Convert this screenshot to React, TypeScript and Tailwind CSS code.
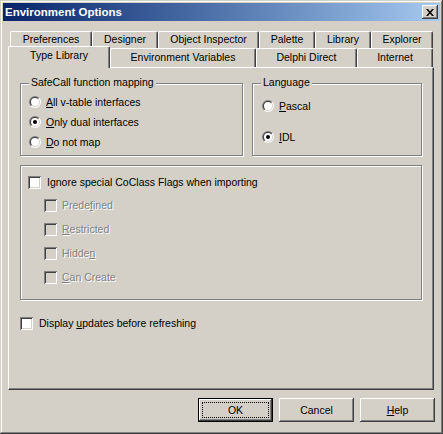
import React from 'react';

const raised =
  'shadow-[inset_-1px_-1px_#404040,inset_1px_1px_#ffffff,inset_-2px_-2px_#808080,inset_2px_2px_#d4d0c8]';

const Radio: React.FC<{ checked?: boolean }> = ({ checked }) => (
  <svg width="12" height="12" viewBox="0 0 12 12" className="shrink-0">
    <defs>
      <linearGradient id="rOuter" x1="0" y1="0" x2="1" y2="1">
        <stop offset="0.5" stopColor="#808080" />
        <stop offset="0.5" stopColor="#ffffff" />
      </linearGradient>
      <linearGradient id="rInner" x1="0" y1="0" x2="1" y2="1">
        <stop offset="0.5" stopColor="#404040" />
        <stop offset="0.5" stopColor="#d4d0c8" />
      </linearGradient>
    </defs>
    <circle cx="6" cy="6" r="6" fill="url(#rOuter)" />
    <circle cx="6" cy="6" r="5" fill="url(#rInner)" />
    <circle cx="6" cy="6" r="4" fill="#ffffff" />
    {checked && <circle cx="6" cy="6" r="2" fill="#000000" />}
  </svg>
);

const Check: React.FC<{ disabled?: boolean }> = ({ disabled }) => (
  <span
    className={`block w-[13px] h-[13px] shrink-0 shadow-[inset_1px_1px_#808080,inset_-1px_-1px_#ffffff,inset_2px_2px_#404040,inset_-2px_-2px_#d4d0c8] ${
      disabled ? 'bg-[#d4d0c8]' : 'bg-white'
    }`}
  />
);

const Group: React.FC<{ label: string; className: string; children?: React.ReactNode }> = ({
  label,
  className,
  children,
}) => (
  <div
    className={`relative border border-[#808080] shadow-[inset_1px_1px_#ffffff,1px_1px_#ffffff] ${className}`}
  >
    {label && (
      <span className="absolute -top-[8px] left-[8px] px-[2px] bg-[#d4d0c8] leading-[13px]">{label}</span>
    )}
    {children}
  </div>
);

const Tab: React.FC<{ label: string; w: string; selected?: boolean; front?: boolean }> = ({
  label,
  w,
  selected,
  front,
}) => {
  if (selected) {
    return (
      <div
        className={`${w} relative z-10 -ml-[2px] -mt-[2px] h-[22px] bg-[#d4d0c8] border-l border-t border-white border-r border-r-[#404040] rounded-tl-[2px] rounded-tr-[2px] shadow-[inset_-1px_0_#808080] flex items-start justify-center pt-[2px]`}
      >
        {label}
      </div>
    );
  }
  return (
    <div
      className={`${w} ${front ? 'h-[19px] pt-[2px]' : 'h-[17px] pt-[1px]'} shrink-0 bg-[#d4d0c8] border-l border-t border-white border-r border-r-[#404040] rounded-tl-[2px] rounded-tr-[2px] shadow-[inset_-1px_0_#808080] flex items-start justify-center`}
    >
      {label}
    </div>
  );
};

const Button: React.FC<{ children: React.ReactNode; isDefault?: boolean }> = ({ children, isDefault }) =>
  isDefault ? (
    <div className="w-[75px] h-[24px] border border-black">
      <div className={`w-full h-full ${raised} p-[3px]`}>
        <div className="w-full h-full border border-dotted border-black flex items-center justify-center">
          {children}
        </div>
      </div>
    </div>
  ) : (
    <div className={`w-[75px] h-[24px] ${raised} flex items-center justify-center`}>{children}</div>
  );

const Dim: React.FC<{ children: React.ReactNode }> = ({ children }) => (
  <span className="text-[#808080] [text-shadow:1px_1px_0_#ffffff]">{children}</span>
);

export default function App() {
  return (
    <div className="w-[443px] h-[434px] bg-[#d4d0c8] p-[3px] flex flex-col text-[10.5px] leading-[13px] text-black font-['Liberation_Sans',Arial,sans-serif] shadow-[inset_-1px_-1px_#404040,inset_1px_1px_#d4d0c8,inset_-2px_-2px_#808080,inset_2px_2px_#ffffff]">
      {/* title bar */}
      <div className="h-[18px] bg-linear-to-r from-[#0a246a] to-[#a6caf0] flex items-center justify-between pl-[2px] pr-[2px]">
        <span className="text-white font-bold text-[11.5px]">Environment Options</span>
        <div className={`w-[16px] h-[14px] bg-[#d4d0c8] ${raised} flex items-center justify-center`}>
          <svg width="8" height="7" viewBox="0 0 8 7">
            <path d="M0 0h2l2 2.5L6 0h2L5 3.5 8 7H6L4 4.5 2 7H0l3-3.5z" fill="#000" />
          </svg>
        </div>
      </div>

      {/* tabs */}
      <div className="mt-[10px] pl-[7px] flex flex-col">
        <div className="flex h-[17px]">
          <Tab label="Preferences" w="w-[82px]" />
          <Tab label="Designer" w="w-[66px]" />
          <Tab label="Object Inspector" w="w-[101px]" />
          <Tab label="Palette" w="w-[56px]" />
          <Tab label="Library" w="w-[56px]" />
          <Tab label="Explorer" w="w-[62px]" />
        </div>
        <div className="flex h-[19px]">
          <Tab label="Type Library" w="w-[102px]" selected />
          <Tab label="Environment Variables" w="w-[146px]" front />
          <Tab label="Delphi Direct" w="w-[101px]" front />
          <Tab label="Internet" w="w-[76px]" front />
        </div>
      </div>

      {/* page */}
      <div className="ml-[5px] w-[426px] h-[323px] border border-t-white border-l-white border-r-[#404040] border-b-[#404040] shadow-[inset_-1px_-1px_#808080] pl-[11px] pt-[15px] flex flex-col">
        <div className="flex gap-[9px]">
          <Group label="SafeCall function mapping" className="w-[223px] h-[73px] pl-[8px] pt-[12px]">
            <div className="flex flex-col gap-[8px]">
              <label className="flex items-center gap-[5px] h-[12px]">
                <Radio />
                <span><u>A</u>ll v-table interfaces</span>
              </label>
              <label className="flex items-center gap-[5px] h-[12px]">
                <Radio checked />
                <span><u>O</u>nly dual interfaces</span>
              </label>
              <label className="flex items-center gap-[5px] h-[12px]">
                <Radio />
                <span><u>D</u>o not map</span>
              </label>
            </div>
          </Group>
          <Group label="Language" className="w-[170px] h-[73px] pl-[9px] pt-[16px]">
            <div className="flex flex-col gap-[19px]">
              <label className="flex items-center gap-[5px] h-[12px]">
                <Radio />
                <span><u>P</u>ascal</span>
              </label>
              <label className="flex items-center gap-[5px] h-[12px]">
                <Radio checked />
                <span><u>I</u>DL</span>
              </label>
            </div>
          </Group>
        </div>

        <Group label="" className="mt-[9px] w-[402px] h-[135px] pl-[7px] pt-[10px]">
          <label className="flex items-center gap-[6px] h-[13px]">
            <Check />
            <span>Ignore special CoClass Flags when importing</span>
          </label>
          <div className="ml-[16px] mt-[10px] flex flex-col gap-[11px]">
            <label className="flex items-center gap-[5px] h-[13px]">
              <Check disabled />
              <Dim>Prede<u>f</u>ined</Dim>
            </label>
            <label className="flex items-center gap-[5px] h-[13px]">
              <Check disabled />
              <Dim><u>R</u>estricted</Dim>
            </label>
            <label className="flex items-center gap-[5px] h-[13px]">
              <Check disabled />
              <Dim>Hidde<u>n</u></Dim>
            </label>
            <label className="flex items-center gap-[5px] h-[13px]">
              <Check disabled />
              <Dim><u>C</u>an Create</Dim>
            </label>
          </div>
        </Group>

        <label className="mt-[17px] flex items-center gap-[6px] h-[13px]">
          <Check />
          <span>Display <u>u</u>pdates before refreshing</span>
        </label>
      </div>

      {/* buttons */}
      <div className="mt-[8px] mr-[5px] flex justify-end gap-[6px]">
        <Button isDefault>OK</Button>
        <Button>Cancel</Button>
        <Button>
          <span><u>H</u>elp</span>
        </Button>
      </div>
    </div>
  );
}
